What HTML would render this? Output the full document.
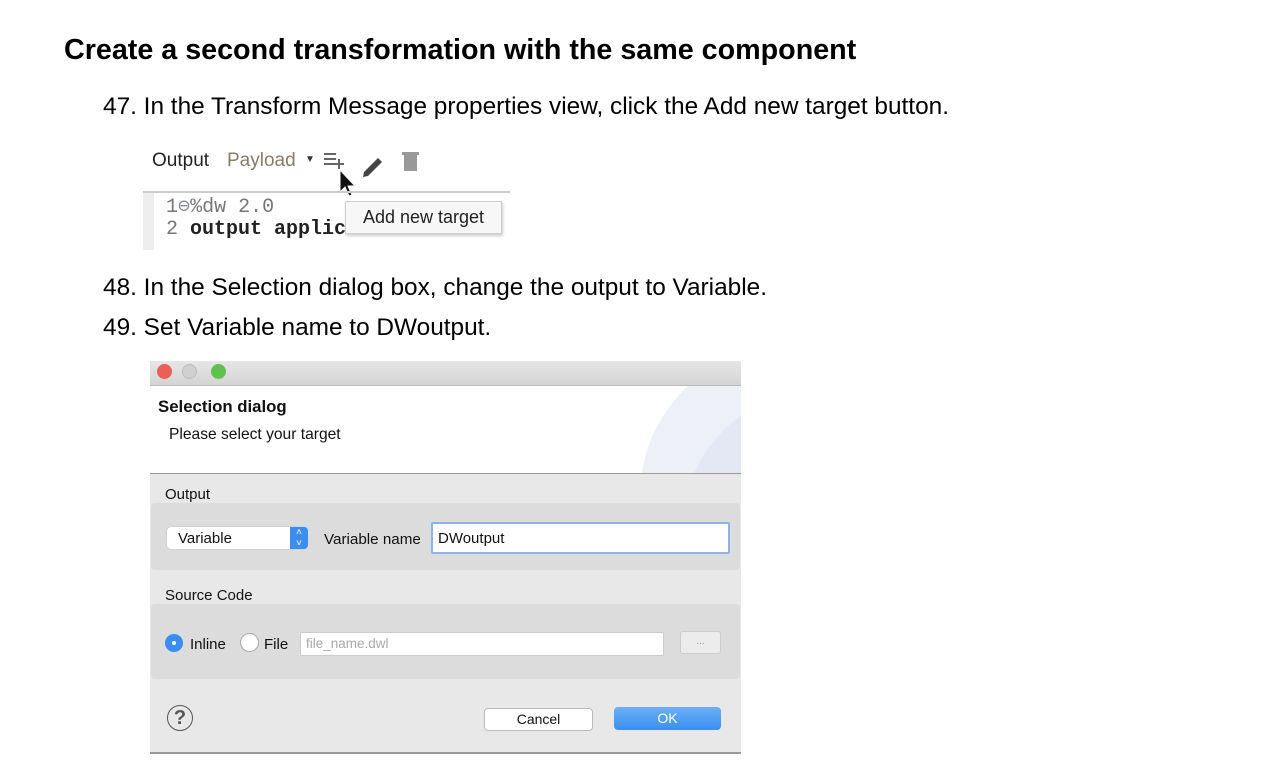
<!DOCTYPE html>
<html><head><style>
body{margin:0;width:1280px;height:766px;background:#fff;position:relative;font-family:"Liberation Sans",sans-serif;overflow:hidden}
.a{position:absolute;white-space:nowrap}
h1{position:absolute;left:64px;top:34px;margin:0;font-size:28.7px;font-weight:bold;color:#000}
.step{font-size:24.4px;color:#000}
.s{font-size:15px;color:#111}
</style></head><body>
<h1>Create a second transformation with the same component</h1>
<div class="a step" style="left:103px;top:93px">47. In the Transform Message properties view, click the Add new target button.</div>

<div class="a" style="left:152px;top:150px;font-size:19px;color:#222">Output</div>
<div class="a" style="left:227px;top:150px;font-size:19px;color:#8a7d68">Payload</div>
<div class="a" style="left:305px;top:154px;font-size:10px;color:#333">▼</div>
<svg class="a" style="left:322px;top:150px" width="110" height="50">
<path d="M2 4h12M2 9h12M2 14h10M12 14h10M17 9v10" stroke="#666" stroke-width="2" fill="none"/>
<path d="M42 22l14-14 4 4-14 14-5 1z" fill="#444"/>
<rect x="82" y="5" width="13" height="16" fill="#999"/><rect x="80" y="2" width="17" height="3" fill="#999"/>
<path d="M18 20v22l5-5 4 9 3-1-4-9h7z" fill="#111" stroke="#fff" stroke-width="1"/>
</svg>
<div class="a" style="left:143px;top:191px;width:367px;height:2px;background:#ccc"></div>
<div class="a" style="left:143px;top:193px;width:11px;height:57px;background:#eee"></div>
<div class="a" style="left:166px;top:193px;font-family:'Liberation Mono',monospace;font-size:20px;color:#777">1<span style="color:#88a">⊖</span>%dw 2.0</div>
<div class="a" style="left:166px;top:218px;font-family:'Liberation Mono',monospace;font-size:20px;color:#222"><span style="color:#777">2</span> <b>output applic</b></div>
<div class="a" style="left:345px;top:201px;width:155px;height:31px;background:#f7f7f7;border:1px solid #ccc;box-shadow:1px 2px 3px rgba(0,0,0,.2);font-size:18px;color:#222;line-height:31px;text-align:center">Add new target</div>

<div class="a step" style="left:103px;top:274px">48. In the Selection dialog box, change the output to Variable.</div>
<div class="a step" style="left:103px;top:314px">49. Set Variable name to DWoutput.</div>

<div class="a" style="left:150px;top:361px;width:591px;height:393px;background:#e8e8e8"></div>
<div class="a" style="left:150px;top:361px;width:591px;height:24px;background:linear-gradient(#e6e6e6,#d4d4d4);border-bottom:1px solid #bbb"></div>
<div class="a" style="left:157px;top:364px;width:15px;height:15px;border-radius:50%;background:#ec5f57"></div>
<div class="a" style="left:182px;top:364px;width:15px;height:15px;border-radius:50%;background:#d0d0d0;box-sizing:border-box;border:1px solid #bbb"></div>
<div class="a" style="left:211px;top:364px;width:15px;height:15px;border-radius:50%;background:#5fc24f"></div>
<div class="a" style="left:150px;top:386px;width:591px;height:87px;background:#fff;overflow:hidden;border-bottom:1px solid #999">
<div class="a" style="left:490px;top:-40px;width:300px;height:300px;border-radius:50%;background:#eef0f8"></div>
<div class="a" style="left:530px;top:0px;width:300px;height:300px;border-radius:50%;background:#e4e8f5"></div>
</div>
<div class="a" style="left:158px;top:397px;font-size:16.8px;font-weight:bold;color:#111">Selection dialog</div>
<div class="a" style="left:169px;top:426px;font-size:15.6px;color:#111">Please select your target</div>
<div class="a s" style="left:165px;top:486px">Output</div>
<div class="a" style="left:151px;top:503px;width:589px;height:67px;background:#dcdcdc;border-radius:4px"></div>
<div class="a" style="left:167px;top:527px;width:140px;height:22px;background:#fff;border-radius:4px;box-shadow:0 0 1px #999"></div>
<div class="a s" style="left:178px;top:530px">Variable</div>
<div class="a" style="left:290px;top:527px;width:18px;height:22px;background:#3b8ef0;border-radius:0 4px 4px 0;color:#fff;font-size:10px;text-align:center;line-height:11px">˄<br>˅</div>
<div class="a" style="left:324px;top:531px;font-size:15.2px;color:#111">Variable name</div>
<div class="a" style="left:431px;top:522px;width:295px;height:28px;background:#fff;border:2px solid #8db4e8;border-radius:2px"></div>
<div class="a s" style="left:438px;top:530px">DWoutput</div>
<div class="a s" style="left:165px;top:587px">Source Code</div>
<div class="a" style="left:151px;top:604px;width:589px;height:75px;background:#dcdcdc;border-radius:4px"></div>
<div class="a" style="left:165px;top:634px;width:18px;height:18px;border-radius:50%;background:#3b8ef0"></div>
<div class="a" style="left:172px;top:641px;width:4px;height:4px;border-radius:50%;background:#fff"></div>
<div class="a s" style="left:190px;top:636px">Inline</div>
<div class="a" style="left:240px;top:633px;width:17px;height:17px;border-radius:50%;background:#fff;border:1px solid #aaa"></div>
<div class="a s" style="left:264px;top:636px">File</div>
<div class="a" style="left:300px;top:632px;width:362px;height:22px;background:#fff;border:1px solid #ccc"></div>
<div class="a" style="left:306px;top:636px;font-size:13.5px;color:#aaa">file_name.dwl</div>
<div class="a" style="left:680px;top:631px;width:39px;height:21px;background:#ececec;border:1px solid #ccc;border-radius:3px;font-size:10px;color:#999;text-align:center;line-height:20px">...</div>
<div class="a" style="left:167px;top:705px;width:26px;height:26px;border-radius:50%;border:1.5px solid #555;box-sizing:border-box;font-size:20px;font-weight:bold;color:#555;text-align:center;line-height:24px">?</div>
<div class="a" style="left:484px;top:708px;width:107px;height:21px;background:#fff;border:1px solid #bbb;border-radius:4px;font-size:14px;color:#111;text-align:center;line-height:21px">Cancel</div>
<div class="a" style="left:614px;top:707px;width:107px;height:23px;background:linear-gradient(#6cb0f8,#3a8ef0);border-radius:4px;font-size:14px;color:#fff;text-align:center;line-height:23px">OK</div>
<div class="a" style="left:150px;top:752px;width:591px;height:2px;background:#999"></div>
</body></html>
